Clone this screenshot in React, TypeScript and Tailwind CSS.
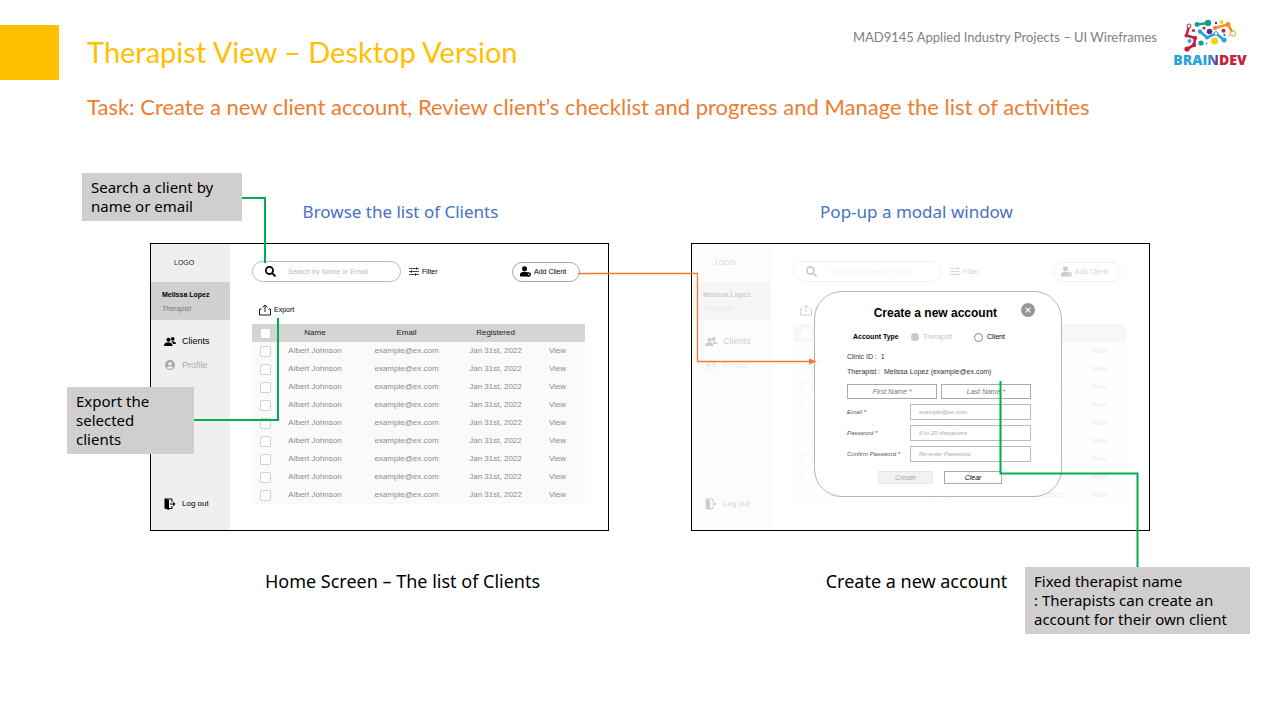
import { useId } from "react";
import type { ReactNode } from "react";
import { FaSearch } from "react-icons/fa";
import { MdAccountCircle } from "react-icons/md";

const rows = Array.from({ length: 9 }, (_, i) => ({
  id: i,
  name: "Albert Johnson",
  email: "example@ex.com",
  registered: "Jan 31st, 2022",
}));

function BrainDevLogo() {
  return (
    <div className="flex w-20 flex-col items-center">
      <svg viewBox="24 9 54 33" className="h-[33px] w-[54px]" aria-hidden="true">
        <g fill="none" strokeWidth="2.600" strokeLinejoin="round">
          <path d="M30 16 27.500 25.500 36 28 35 35 28 39" stroke="#c4213f" />
          <path d="M38 14.500 49 13" stroke="#13a18f" />
          <path d="M56 18 69 14.500 74 23.500" stroke="#f0912d" />
          <path d="M41 21.500 48 27.500 57 23.500 65 30" stroke="#2aa3dd" />
        </g>
        <circle cx="30" cy="16" r="2" fill="#fff" stroke="#c4213f" />
        <g fill="#c4213f">
          <circle cx="27.500" cy="25.500" r="2" /><circle cx="36" cy="28" r="2.200" />
          <circle cx="35" cy="35" r="2.200" /><circle cx="28" cy="39" r="2.600" /><circle cx="64.500" cy="20.800" r="2" />
        </g>
        <g fill="#13a18f">
          <circle cx="38" cy="14.500" r="2.400" /><circle cx="49" cy="13" r="3.200" />
          <circle cx="42" cy="33" r="2.600" /><circle cx="65.500" cy="25" r="1.200" />
        </g>
        <g fill="#f0912d">
          <circle cx="56" cy="18" r="2.200" /><circle cx="69" cy="14.500" r="2.500" />
        </g>
        <circle cx="74" cy="23.500" r="2.600" fill="#fff" stroke="#f0912d" />
        <g fill="#2aa3dd">
          <circle cx="41" cy="21.500" r="2.200" /><circle cx="48" cy="27.500" r="2" />
          <circle cx="65" cy="30" r="2.500" /><circle cx="30.500" cy="31" r="2" /><circle cx="47.500" cy="33.500" r="1" />
        </g>
        <circle cx="57" cy="23.500" r="1.900" fill="#fff" stroke="#2aa3dd" />
        <g fill="#f6cf18">
          <circle cx="55.500" cy="31" r="3.500" /><circle cx="62.500" cy="12" r="2" /><circle cx="70" cy="25.500" r="1" />
        </g>
        <g fill="#5b2e8c">
          <circle cx="50.500" cy="21.500" r="2.800" /><circle cx="57" cy="13" r="1.200" />
        </g>
        <g fill="#c4213f">
          <circle cx="34.500" cy="20.500" r="1.600" /><circle cx="45" cy="18" r="1.600" />
        </g>
      </svg>
      <p className="flex font-['Open_Sans',sans-serif] text-sm leading-4 font-extrabold">
        <span className="text-[#2aa3dd]">BRAI</span>
        <span className="bg-linear-to-r from-[#2aa3dd] to-[#5b2e8c] bg-clip-text text-transparent">N</span>
        <span className="text-[#c4213f]">DEV</span>
      </p>
    </div>
  );
}

function PeopleIcon() {
  return (
    <svg viewBox="0 0 24 18" className="h-[9px] w-3" fill="currentColor" aria-hidden="true">
      <circle cx="9" cy="5.500" r="4.200" />
      <path d="M0 18c0-5.500 3.500-7.500 8.500-7.500s8.500 2 8.500 7.500z" />
      <circle cx="17.500" cy="3.800" r="3.600" />
      <path d="M14.500 8.500c5.500-.8 9.500 1.500 9.500 5.500h-6c-.4-2.400-1.600-4-3.500-5z" />
    </svg>
  );
}

function DoorIcon() {
  return (
    <svg viewBox="0 0 24 24" className="size-3" aria-hidden="true">
      <path d="M2 2h14v6M16 16v5H8" fill="none" stroke="currentColor" strokeWidth="2" />
      <path d="M1 1l9 3v20l-9-3z" fill="currentColor" />
      <path d="M12 11h6V7.500L23 12l-5 4.500V13h-6z" fill="currentColor" />
    </svg>
  );
}

function SlidersIcon() {
  return (
    <svg viewBox="0 0 20 18" className="h-[9px] w-2.5" fill="none" stroke="currentColor" strokeWidth="1.400" aria-hidden="true">
      <path d="M0 3h20M0 9h20M0 15h20M15 .5v5M5 6.500v5M13 12.500v5" />
    </svg>
  );
}

function UploadIcon() {
  return (
    <svg viewBox="0 0 24 24" className="size-3" fill="none" stroke="currentColor" strokeWidth="1.800" aria-hidden="true">
      <path d="M5 10H1v12h22V10h-4M12 16V2M7 7l5-5 5 5" />
    </svg>
  );
}

function AddPersonIcon() {
  return (
    <svg viewBox="0 0 22 22" className="size-[11px]" aria-hidden="true">
      <circle cx="9" cy="5.500" r="5" fill="currentColor" />
      <path d="M0 21v-4c0-3.500 3-5.500 9-5.500s9 2 9 5.500v4z" fill="currentColor" />
      <circle cx="17.500" cy="17" r="4.500" fill="currentColor" />
      <path d="M17.500 15v4M15.500 17h4" stroke="#fff" />
    </svg>
  );
}

function Checkbox({ label }: { label: string }) {
  return (
    <input
      type="checkbox"
      aria-label={label}
      className="mx-auto block size-[11px] appearance-none rounded-[2px] border border-[#d2d2d2] bg-white"
    />
  );
}

function ClientsScreen() {
  const searchId = useId();
  return (
    <div className="flex h-full font-['Liberation_Sans',Arial,sans-serif] text-[7px] leading-[10px] text-[#222]">
      <aside className="flex w-[79px] shrink-0 flex-col bg-[#efefef]">
        <p className="flex h-[38px] items-center pl-[23px]">LOGO</p>
        <div className="flex h-[38px] flex-col justify-center gap-1 bg-[#d0d0d0] pt-0.5 pl-[11px]">
          <p className="font-bold text-black">Melissa Lopez</p>
          <p className="text-[#777] italic">Therapist</p>
        </div>
        <nav className="flex grow flex-col gap-3 pt-[15px] pb-5 pl-[13px] text-[9px] leading-3">
          <a href="#clients" className="flex items-center gap-1.5 text-black"><PeopleIcon />Clients</a>
          <a href="#profile" className="flex items-center gap-1.5 text-[#aaa]"><MdAccountCircle className="size-3" />Profile</a>
          <a href="#logout" className="mt-auto flex items-center gap-1.5 text-[8px] text-black"><DoorIcon />Log out</a>
        </nav>
      </aside>
      <div className="flex grow flex-col pt-[17px] pr-[23px] pl-[22px]">
        <div className="flex items-center">
          <div className="flex h-[21px] w-[149px] items-center gap-3 rounded-full border border-[#bbb] pl-3">
            <label htmlFor={searchId} aria-label="Search" className="text-black"><FaSearch className="size-[11px]" /></label>
            <input id={searchId} type="search" placeholder="Search by Name or Email" className="w-24 bg-transparent outline-none placeholder:text-[#bcbcbc]" />
          </div>
          <button type="button" className="ml-2 flex items-center gap-[3px] text-black"><SlidersIcon />Filter</button>
          <button type="button" className="mr-[5px] ml-auto flex h-5 w-[68px] items-center gap-[3px] rounded-full border border-[#aaa] pl-[7px] text-black"><AddPersonIcon />Add Client</button>
        </div>
        <button type="button" className="mt-[22px] ml-[7px] flex items-center gap-[3px] self-start text-black"><UploadIcon />Export</button>
        <table className="mt-2 w-full table-fixed border-collapse text-center text-[8px]">
          <colgroup>
            <col className="w-[26px]" /><col className="w-[74px]" /><col className="w-[109px]" /><col className="w-[69px]" /><col />
          </colgroup>
          <thead className="bg-[#d4d4d4]">
            <tr className="h-[18px]">
              <th className="p-0"><Checkbox label="Select all clients" /></th>
              <th className="p-0 font-normal">Name</th>
              <th className="p-0 font-normal">Email</th>
              <th className="p-0 font-normal">Registered</th>
              <th className="p-0" aria-label="Actions" />
            </tr>
          </thead>
          <tbody className="bg-[#fafafa] text-[#8c8c8c]">
            {rows.map((r) => (
              <tr key={r.id} className="h-[18px]">
                <td className="p-0"><Checkbox label={`Select ${r.name}`} /></td>
                <td className="p-0">{r.name}</td>
                <td className="p-0">{r.email}</td>
                <td className="p-0">{r.registered}</td>
                <td className="p-0"><a href="#view">View</a></td>
              </tr>
            ))}
          </tbody>
        </table>
      </div>
    </div>
  );
}

function Field({ label, placeholder, type }: { label: string; placeholder: string; type: string }) {
  const id = useId();
  return (
    <div className="flex items-center text-[6px]">
      <label htmlFor={id} className="w-[63px] shrink-0 text-[#555] italic">{label}</label>
      <input id={id} type={type} placeholder={placeholder} className="h-4 w-[121px] border border-[#bbb] px-2 italic outline-none placeholder:text-[#aaa]" />
    </div>
  );
}

function AccountModal() {
  const group = useId();
  return (
    <form
      aria-label="Create a new account"
      className="absolute top-[47px] left-[122px] flex h-[206px] w-[248px] flex-col rounded-[28px] border border-[#b4b4b4] bg-white pt-[11px] pr-[30px] pl-8 font-['Liberation_Sans',Arial,sans-serif] text-[7px] leading-[10px] text-[#333]"
    >
      <div className="flex items-start justify-end gap-6">
        <h3 className="pt-0.5 text-xs leading-4 font-bold text-black">Create a new account</h3>
        <button type="button" aria-label="Close" className="-mr-1 flex size-3.5 items-center justify-center rounded-full bg-[#969696]">
          <svg viewBox="0 0 10 10" className="size-2" stroke="#fff" strokeWidth="1.300" aria-hidden="true"><path d="M2 2l6 6M8 2l-6 6" /></svg>
        </button>
      </div>
      <fieldset className="mt-[10px] flex h-3 items-center pl-1.5 text-black">
        <legend className="float-left mr-2.5 w-12 leading-3 font-bold">Account Type</legend>
        <label className="flex w-[63px] items-center gap-1 text-[#c4c4c4]">
          <input type="radio" name={group} defaultChecked className="size-2 appearance-none rounded-full bg-[#c8c8c8]" />Therapist
        </label>
        <label className="flex items-center gap-1">
          <input type="radio" name={group} className="size-[9px] appearance-none rounded-full border border-[#888]" />Client
        </label>
      </fieldset>
      <p className="mt-[9px]">Clinic ID :&nbsp; 1</p>
      <p className="mt-[5px] whitespace-nowrap">Therapist :&nbsp; Melissa Lopez (example@ex.com)</p>
      <div className="mt-[7px] flex gap-1">
        <input aria-label="First Name" placeholder="First Name *" className="h-[15px] w-[90px] border border-[#aaa] text-center italic outline-none placeholder:text-[#777]" />
        <input aria-label="Last Name" placeholder="Last Name *" className="h-[15px] w-[90px] border border-[#aaa] text-center italic outline-none placeholder:text-[#777]" />
      </div>
      <div className="mt-[5px] flex flex-col gap-[5px]">
        <Field label="Email *" placeholder="example@ex.com" type="email" />
        <Field label="Password *" placeholder="6 to 20 characters" type="password" />
        <Field label="Confirm Password *" placeholder="Re-enter Password" type="password" />
      </div>
      <div className="mt-[9px] flex gap-[11px] pl-[31px]">
        <button type="button" className="h-[13px] w-[55px] border border-[#e8e8e8] bg-[#f2f2f2] text-[#aaa] italic">Create</button>
        <button type="button" className="h-[13px] w-[58px] border border-[#aaa] text-black italic">Clear</button>
      </div>
    </form>
  );
}

function Note({ className, children }: { className: string; children: ReactNode }) {
  return (
    <p className={`absolute bg-[#d0cece] px-[9px] py-[5px] font-['Noto_Sans',sans-serif] text-[15px] leading-[19px] text-black ${className}`}>
      {children}
    </p>
  );
}

export default function App() {
  return (
    <main className="min-h-screen overflow-hidden bg-white font-['Noto_Sans',sans-serif]">
      <header className="flex items-start pt-[19px] pr-[30px] font-[Lato,sans-serif]">
        <div className="mt-1.5 h-[55px] w-[59px] shrink-0 bg-[#ffc000]" />
        <h1 className="mt-3.5 ml-7 text-[29px] leading-[38px] text-[#ffc000]">Therapist View – Desktop Version</h1>
        <p className="mt-2 mr-[13px] ml-auto text-[13px] leading-5 text-[#7f7f7f]">MAD9145 Applied Industry Projects – UI Wireframes</p>
        <BrainDevLogo />
      </header>
      <h2 className="mt-[13px] ml-[87px] font-[Lato,sans-serif] text-[22px] leading-7 text-[#ed7d31]">
        Task: Create a new client account, Review client’s checklist and progress and Manage the list of activities
      </h2>
      <section className="flex gap-[82px] pt-[79px] pl-[150px]">
        <figure className="w-[459px] shrink-0">
          <h3 className="pl-[42px] text-center text-[17px] leading-6 text-[#4472c4]">Browse the list of Clients</h3>
          <div className="relative mt-[19px] h-72 border border-black">
            <ClientsScreen />
            <Note className="-top-[71px] -left-[69px] w-40">Search a client by name or email</Note>
            <Note className="top-[143px] -left-[84px] w-[127px]">Export the<br />selected<br />clients</Note>
            <svg viewBox="0 0 180 240" className="pointer-events-none absolute -top-[54px] left-[39px] h-60 w-[180px]" fill="none" stroke="#00b050" strokeWidth="2" aria-hidden="true">
              <path d="M52 8H75V73" />
              <path d="M88 128V230H4" />
            </svg>
          </div>
          <figcaption className="mt-[38px] pl-[46px] text-center text-lg leading-6">Home Screen – The list of Clients</figcaption>
        </figure>
        <figure className="w-[459px] shrink-0">
          <h3 className="pr-2 text-center text-[17px] leading-6 text-[#4472c4]">Pop-up a modal window</h3>
          <div className="relative mt-[19px] h-72 border border-black">
            <div className="h-full opacity-20" inert>
              <ClientsScreen />
            </div>
            <AccountModal />
            <svg viewBox="0 0 250 100" className="pointer-events-none absolute top-[26px] -left-[115px] h-[100px] w-[250px]" aria-hidden="true">
              <path d="M1 3.500H120.500V91.500H232" fill="none" stroke="#ed7d31" strokeWidth="1.300" />
              <path d="M232 88.500 240 91.500 232 94.500z" fill="#ed7d31" />
            </svg>
            <svg viewBox="0 0 150 190" className="pointer-events-none absolute top-[136px] left-[300px] h-[190px] w-[150px]" fill="none" stroke="#00b050" strokeWidth="2" aria-hidden="true">
              <path d="M8.500 1V93.500H145.500V187" />
            </svg>
            <Note className="top-[323px] left-[333px] w-[225px]">
              Fixed therapist name<br />: Therapists can create an account for their own client
            </Note>
          </div>
          <figcaption className="mt-[38px] pr-2 text-center text-lg leading-6">Create a new account</figcaption>
        </figure>
      </section>
    </main>
  );
}
